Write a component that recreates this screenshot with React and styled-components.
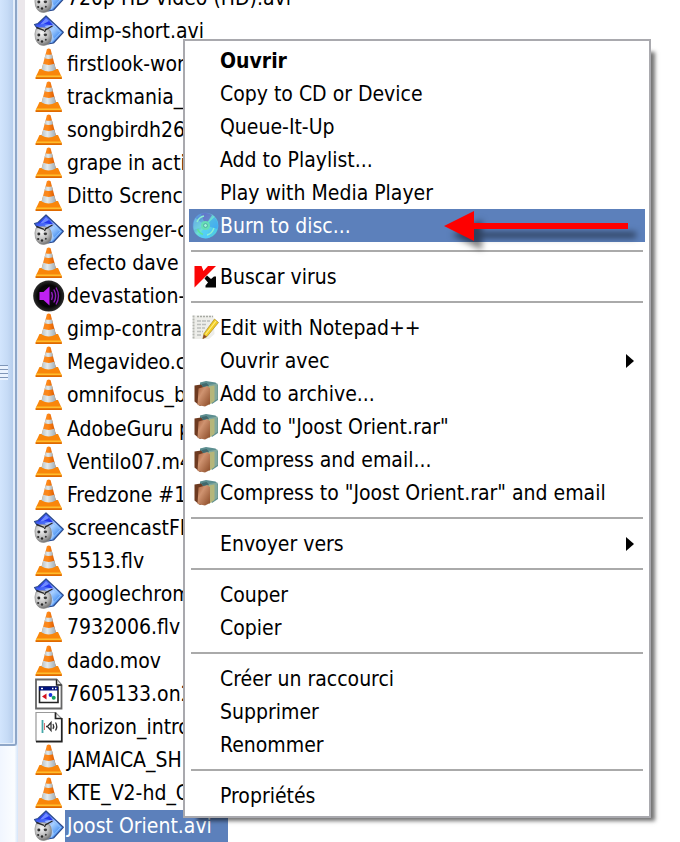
import React from 'react';
import styled, { createGlobalStyle, css } from 'styled-components';

const GlobalStyle = createGlobalStyle`
  * {
    box-sizing: border-box;
  }
  body {
    margin: 0;
    background: #fff;
    color: #000;
    font-family: 'DejaVu Sans Condensed', 'DejaVu Sans', sans-serif;
    font-size: 21px;
  }
`;

const Desktop = styled.main`
  position: relative;
  display: flex;
  height: 100vh;
  min-height: 842px;
  overflow: hidden;
`;

const ScrollTrack = styled.div`
  flex: 0 0 18px;
  display: flex;
  flex-direction: column;
  background: linear-gradient(90deg, #f1f6ff, #fbfdff 80%, #d5e5fa);
  padding-bottom: 96px;
`;

const ScrollThumb = styled.div`
  flex: 1;
  display: flex;
  flex-direction: column;
  justify-content: center;
  margin-right: 1px;
  border-right: 2px solid #8ea6c8;
  border-bottom: 2px solid #8ea6c8;
  border-bottom-right-radius: 3px;
  box-shadow: inset -2px -1px 0 #e4eefb;
  background: linear-gradient(90deg, #d2e5fd, #c6dbf6 50%, #b2c9e8);
`;

const Grip = styled.div`
  width: 8px;
  height: 15px;
  background: repeating-linear-gradient(#7f96b8 0 1px, #eaf3ff 1px 4px);
`;

const Edge = styled.div`
  flex: 0 0 7px;
  background: #ebe7eb;
`;

const FileList = styled.ul`
  flex: 1;
  display: grid;
  grid-auto-rows: 1fr;
  list-style: none;
  height: calc(100% + 20px);
  margin: -19px 0 0;
  padding: 0 0 0 8px;
`;

const FileRow = styled.li`
  display: flex;
`;

const FileButton = styled.button`
  display: flex;
  align-items: stretch;
  border: 0;
  padding: 0;
  background: none;
  color: inherit;
  font: inherit;
  white-space: nowrap;
`;

const FileLabel = styled.span`
  display: flex;
  align-items: center;
  padding: 0 16px 0 2px;
  ${({ $selected }) =>
    $selected &&
    css`
      background: #5c80bb;
      color: #fff;
    `}
`;

const FileIcon = styled.svg`
  flex: none;
  align-self: center;
  width: 32px;
  height: 32px;
`;

const Menu = styled.div`
  position: absolute;
  top: 39px;
  left: 183px;
  right: 29px;
  display: flex;
  flex-direction: column;
  padding: 3px 4px 4px;
  border: 2px solid #a9a9ae;
  background: #fff;
  box-shadow: 9px 8px 4px -5px rgba(0, 0, 0, 0.55);
`;

const MenuItem = styled.button`
  position: relative;
  display: flex;
  align-items: center;
  height: 33px;
  border: 0;
  padding: 0 10px 0 3px;
  background: ${({ $active }) => ($active ? '#5c80bb' : 'none')};
  color: ${({ $active }) => ($active ? '#fff' : '#000')};
  font: inherit;
  font-weight: ${({ $bold }) => ($bold ? 700 : 400)};
  text-align: left;
  white-space: nowrap;
`;

const IconSlot = styled.span`
  flex: 0 0 28px;
  display: flex;

  svg {
    width: 27px;
    height: 27px;
  }
`;

const MenuText = styled.span`
  flex: 1;
`;

const Separator = styled.hr`
  width: calc(100% - 4px);
  height: 2px;
  margin: 8px 2px;
  border: 0;
  background: #aaa;
`;

const SubArrow = styled.svg`
  width: 9px;
  height: 14px;
`;

const Pointer = styled.svg`
  position: absolute;
  right: 17px;
  top: 2px;
  width: 184px;
  height: 30px;
  overflow: visible;
  filter: drop-shadow(8px 9px 3px rgba(0, 0, 0, 0.5));
`;

const Defs = styled.svg`
  position: absolute;
  width: 0;
  height: 0;
`;

const Gradients = () => (
  <Defs aria-hidden="true">
    <defs>
      <linearGradient id="coneOrange">
        <stop offset="0" stopColor="#f08a2c" />
        <stop offset="0.45" stopColor="#ff8716" />
        <stop offset="1" stopColor="#d65500" />
      </linearGradient>
      <linearGradient id="coneWhite">
        <stop offset="0" stopColor="#b9c3c8" />
        <stop offset="0.4" stopColor="#e4eaec" />
        <stop offset="1" stopColor="#9fabb2" />
      </linearGradient>
      <linearGradient id="film" x1="0" y1="0" x2="1" y2="1">
        <stop offset="0" stopColor="#2a3fe0" />
        <stop offset="0.35" stopColor="#4a6cf8" />
        <stop offset="0.55" stopColor="#a8d0ff" />
        <stop offset="0.75" stopColor="#5a9cf4" />
        <stop offset="1" stopColor="#2f6fdb" />
      </linearGradient>
      <radialGradient id="reel" cx="0.4" cy="0.3" r="0.7">
        <stop offset="0" stopColor="#f6f6f6" />
        <stop offset="0.6" stopColor="#bdbdbd" />
        <stop offset="1" stopColor="#757575" />
      </radialGradient>
      <radialGradient id="speaker">
        <stop offset="0" stopColor="#1c0526" />
        <stop offset="0.7" stopColor="#050505" />
        <stop offset="1" stopColor="#2c2c2c" />
      </radialGradient>
      <linearGradient id="disc" x1="0" y1="0" x2="1" y2="1">
        <stop offset="0" stopColor="#5fb2ec" />
        <stop offset="0.25" stopColor="#5a8ed8" />
        <stop offset="0.5" stopColor="#6ce0d4" />
        <stop offset="0.75" stopColor="#4cc4f4" />
        <stop offset="1" stopColor="#58e6b8" />
      </linearGradient>
      <linearGradient id="book" x1="0" y1="0" x2="1" y2="1">
        <stop offset="0" stopColor="#a8603c" />
        <stop offset="0.35" stopColor="#cf9370" />
        <stop offset="1" stopColor="#8a4a26" />
      </linearGradient>
    </defs>
  </Defs>
);

const ConeIcon = () => (
  <FileIcon viewBox="0 0 32 32">
    <path d="M6.5 21H25L28.7 29V31H2.7V29Z" fill="#f9860a" />
    <path d="M3.5 27.5H28L28.7 29.5H2.7Z" fill="#ffbd2e" />
    <path d="M2.7 29.3H28.7V31H2.7Z" fill="#e06a00" />
    <path d="M13.9 1.2Q15.7 -0.2 17.6 1.2L22.8 21Q15.7 25.5 8.7 21Z" fill="url(#coneOrange)" />
    <path d="M12.6 6.2Q15.7 7.4 18.900 6.200L20 10.200Q15.700 11.600 11.500 10.200Z" fill="url(#coneWhite)" />
    <path d="M10.2 15.8Q15.7 18 21.4 15.8L22.900 21.500Q15.700 25.500 8.600 21.500Z" fill="url(#coneWhite)" />
  </FileIcon>
);

const AviIcon = () => (
  <FileIcon viewBox="0 0 32 32">
    <path
      d="M13 1L30.3 17.3L20.5 28L15 29L1.5 9.5L5 8.5Z"
      fill="url(#film)"
      stroke="#2b4a8c"
      strokeWidth="1.2"
      strokeLinejoin="round"
    />
    <path d="M13 3L21 11L12 9L4.5 9.600Z" fill="#2438ee" />
    <path d="M13 3L16 6L10 9.200L7 9.400Z" fill="#6f8bff" />
    <path d="M12 11L21.5 9.500L17 14L21 24L18.5 28Z" fill="#dcebff" opacity="0.5" />
    <path d="M21 12L28 18M19.500 26L27.500 17.500" stroke="#8cc0ff" strokeWidth="1" />
    <path
      d="M3 14Q1 19 2.5 24Q5 31 11 30.5Q18 29.5 18.5 23Q19 16 15 13.5Q8 11.500 3 14Z"
      fill="url(#reel)"
      stroke="#868686"
      strokeWidth="0.6"
    />
    <path d="M3.5 12.5L11 15.3M19.500 11L12.5 14.800L11.500 17" fill="none" stroke="#2a2a2a" strokeWidth="1.4" />
    <ellipse cx="5.800" cy="20" rx="1.500" ry="1.400" fill="#2a2a2a" />
    <ellipse cx="12.400" cy="19.800" rx="1.700" ry="1.400" fill="#3a3a3a" />
    <circle cx="5.200" cy="25" r="1.100" fill="#2a2a2a" />
    <circle cx="9" cy="26.500" r="1.200" fill="#2a2a2a" />
    <circle cx="12.800" cy="24.800" r="1" fill="#3a3a3a" />
  </FileIcon>
);

const SpeakerIcon = () => (
  <FileIcon viewBox="0 0 32 32">
    <circle cx="15.7" cy="16" r="15.5" fill="url(#speaker)" />
    <path d="M6.5 12H10.5L16.5 6.500V25.500L10.5 20H6.5Z" fill="#c020f4" />
    <path
      d="M18.5 12Q20.5 16 18.5 20M20.8 9.5Q24.5 16 20.8 22.5M23 7.5Q28 16 23 24.5"
      fill="none"
      stroke="#8a1cb8"
      strokeWidth="1.4"
    />
  </FileIcon>
);

const WindowFileIcon = () => (
  <FileIcon viewBox="0 0 32 32">
    <path d="M3 1.5H23.5L28.5 7V30.5H3Z" fill="#fff" stroke="#666" strokeWidth="1.8" />
    <path d="M23.5 1.5V7H28.5" fill="#ddd" stroke="#222" strokeWidth="1.4" />
    <path d="M6.5 9H25V24.5H6.5Z" fill="#fff" stroke="#222" strokeWidth="1.6" />
    <path d="M6 8.5H25V12.5H6Z" fill="#00137e" />
    <path d="M8 10.5H10M19 10.5H20.5M22 10.5H23.5" stroke="#fff" strokeWidth="1.3" />
    <path d="M9 18.5L13.5 15.5V21.5Z" fill="#d4101c" />
    <circle cx="17.5" cy="17" r="1.9" fill="#1733d8" />
    <circle cx="20.7" cy="19.7" r="2" fill="#14a060" />
  </FileIcon>
);

const SoundFileIcon = () => (
  <FileIcon viewBox="0 0 32 32">
    <path d="M3 1.5H22.5L28.5 7.5V30H3Z" fill="#fff" stroke="#999" strokeWidth="1.2" />
    <path d="M22.5 1.5V7.5H28.5M28.8 7V30.7H3" fill="none" stroke="#222" strokeWidth="1.7" />
    <path d="M9.5 9V22" stroke="#46a7a8" strokeWidth="1.8" />
    <path d="M11.5 12V19" stroke="#d87070" strokeWidth="1" />
    <path
      d="M13 15.5H14.5L18 11.5V19.5L14.5 15.5M20 13Q21.5 15.5 20 18M22.5 11.5Q25 15.5 22.5 19.5"
      fill="none"
      stroke="#333"
      strokeWidth="1.3"
    />
  </FileIcon>
);

const DiscIcon = () => (
  <svg viewBox="0 0 27 27">
    <circle cx="13.5" cy="13.5" r="12.8" fill="url(#disc)" />
    <path d="M13.5 13.5L9 1.8Q15 -0.5 20 3Z" fill="#6470c4" opacity="0.8" />
    <path d="M13.5 13.5L2 18Q0 12 3.5 6Z" fill="#74d8e8" opacity="0.6" />
    <path d="M13.5 13.5L25.5 17Q27 10 22.5 5Z" fill="#3c9ff0" opacity="0.6" />
    <path d="M13.5 13.5L7 24.5Q13 28 18 25.5Z" fill="#54cdf8" opacity="0.8" />
    <path d="M5 10Q7 5 12 4M22 16Q20 22 15 23" fill="none" stroke="#8df0d0" strokeWidth="1.4" />
    <path d="M5.500 17Q7 21 11 22.500" fill="none" stroke="#5fe39c" strokeWidth="1.4" />
    <circle cx="13.5" cy="13.5" r="4.5" fill="#66dfb4" />
    <circle cx="13.5" cy="13.5" r="1.9" fill="#a6f4dc" stroke="#3f9d9c" strokeWidth="0.8" />
  </svg>
);

const VirusIcon = () => (
  <svg viewBox="0 0 27 27">
    <path d="M2.5 3H9.5L11.5 8L16 3H24L2.5 24.5Z" fill="#fb0505" />
    <path d="M15 12.5L19 16L22 13.5H24V24.5H13.5V22.5L16 19.5L12.5 15.5Z" fill="#050505" />
  </svg>
);

const NotepadIcon = () => (
  <svg viewBox="0 0 27 27">
    <path d="M1 1.5H21.5L22.5 20L17 25H1Z" fill="#eeeeea" />
    <path d="M1.5 1.5V25" stroke="#b4b6b0" strokeWidth="2" strokeDasharray="2 1" />
    <path d="M5 2.5H21" stroke="#a8aaa4" strokeWidth="1.6" strokeDasharray="2 1" />
    <path
      d="M5 7H18M5 10.5H15M5 14H13M5 17.5H11M5 21H10"
      stroke="#bcbebc"
      strokeWidth="1.4"
      strokeDasharray="4 1"
    />
    <path d="M22.5 5L26.5 8.5L15 22.5L11 24.5L12 19.5Z" fill="#f2cc25" stroke="#a88a20" strokeWidth="0.7" />
    <path d="M24 7L13.5 20.5" stroke="#fff084" strokeWidth="1.2" />
    <path d="M11.9 20.5L14.8 22.7L10.5 25Z" fill="#8b4b30" />
  </svg>
);

const ArchiveIcon = () => (
  <svg viewBox="0 0 27 27">
    <path d="M8 2.5L14 1L23.5 2.5L26 5V20L20 24L8 6Z" fill="#5c8e90" />
    <path d="M17 5L25.5 3.5V19L20 22Z" fill="#83a89c" />
    <path d="M14 7L22.5 5.5V21L17 25Z" fill="#b5b67a" />
    <path d="M2.5 5.5L9 4.5L12 8V24L8 26L2.5 21.5Z" fill="#6e3a20" />
    <path d="M6.5 8.5L15 6L18 8V24L13 26.5L5.500 25Z" fill="url(#book)" />
    <path d="M9.5 4L14.5 3L17 5.5L11 7Z" fill="#41686c" />
  </svg>
);

const icons = {
  cone: ConeIcon,
  avi: AviIcon,
  speaker: SpeakerIcon,
  window: WindowFileIcon,
  sound: SoundFileIcon,
  disc: DiscIcon,
  virus: VirusIcon,
  notepad: NotepadIcon,
  archive: ArchiveIcon,
};

const files = [
  ['avi', '720p HD video (HD).avi'],
  ['avi', 'dimp-short.avi'],
  ['cone', 'firstlook-wor'],
  ['cone', 'trackmania_r'],
  ['cone', 'songbirdh26'],
  ['cone', 'grape in acti'],
  ['cone', 'Ditto Screnca'],
  ['avi', 'messenger-c'],
  ['cone', 'efecto dave'],
  ['speaker', 'devastation-'],
  ['cone', 'gimp-contras'],
  ['cone', 'Megavideo.c'],
  ['cone', 'omnifocus_b'],
  ['cone', 'AdobeGuru p'],
  ['cone', 'Ventilo07.m4'],
  ['cone', 'Fredzone #1'],
  ['avi', 'screencastFI'],
  ['cone', '5513.flv'],
  ['avi', 'googlechrom'],
  ['cone', '7932006.flv'],
  ['cone', 'dado.mov'],
  ['window', '7605133.on2'],
  ['sound', 'horizon_intro'],
  ['cone', 'JAMAICA_SH'],
  ['cone', 'KTE_V2-hd_G'],
  ['avi', 'Joost Orient.avi'],
];

const groups = [
  [
    { text: 'Ouvrir', bold: true },
    { text: 'Copy to CD or Device' },
    { text: 'Queue-It-Up' },
    { text: 'Add to Playlist...' },
    { text: 'Play with Media Player' },
    { text: 'Burn to disc...', icon: 'disc', active: true },
  ],
  [{ text: 'Buscar virus', icon: 'virus' }],
  [
    { text: 'Edit with Notepad++', icon: 'notepad' },
    { text: 'Ouvrir avec', submenu: true },
    { text: 'Add to archive...', icon: 'archive' },
    { text: 'Add to "Joost Orient.rar"', icon: 'archive' },
    { text: 'Compress and email...', icon: 'archive' },
    { text: 'Compress to "Joost Orient.rar" and email', icon: 'archive' },
  ],
  [{ text: 'Envoyer vers', submenu: true }],
  [{ text: 'Couper' }, { text: 'Copier' }],
  [{ text: 'Créer un raccourci' }, { text: 'Supprimer' }, { text: 'Renommer' }],
  [{ text: 'Propriétés' }],
];

const ContextMenu = () => (
  <Menu role="menu">
    {groups.map((group, index) => (
      <React.Fragment key={index}>
        {index > 0 && <Separator />}
        {group.map((item) => {
          const Icon = icons[item.icon];
          return (
            <MenuItem
              key={item.text}
              type="button"
              role="menuitem"
              $active={item.active}
              $bold={item.bold}
            >
              <IconSlot>{Icon && <Icon />}</IconSlot>
              <MenuText>{item.text}</MenuText>
              {item.submenu && (
                <SubArrow viewBox="0 0 9 14">
                  <path d="M0 0L8 7L0 14Z" fill="#000" />
                </SubArrow>
              )}
              {item.active && (
                <Pointer viewBox="0 0 184 30" aria-hidden="true">
                  <path d="M0 15L30 0V12H184V18H30V30Z" fill="#fe0000" />
                </Pointer>
              )}
            </MenuItem>
          );
        })}
      </React.Fragment>
    ))}
  </Menu>
);

const App = () => {
  return (
    <>
      <GlobalStyle />
      <Gradients />
      <Desktop>
        <ScrollTrack>
          <ScrollThumb>
            <Grip />
          </ScrollThumb>
        </ScrollTrack>
        <Edge />
        <FileList>
          {files.map(([type, name]) => {
            const Icon = icons[type];
            return (
              <FileRow key={name}>
                <FileButton type="button">
                  <Icon />
                  <FileLabel $selected={name === 'Joost Orient.avi'}>
                    {name}
                  </FileLabel>
                </FileButton>
              </FileRow>
            );
          })}
        </FileList>
        <ContextMenu />
      </Desktop>
    </>
  );
};

export default App;
